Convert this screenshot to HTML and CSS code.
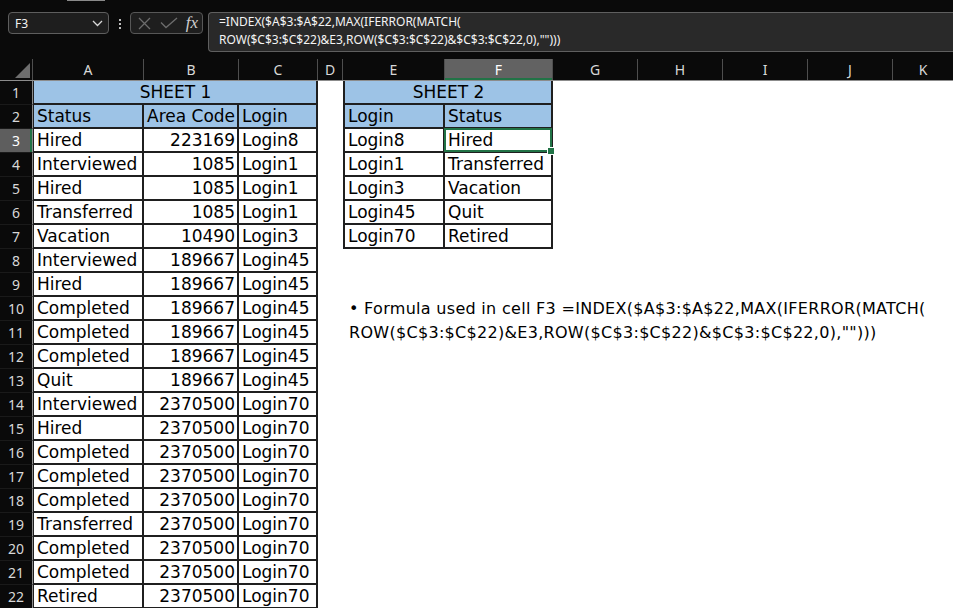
FILE: index.html
```html
<!DOCTYPE html>
<html>
<head>
<meta charset="utf-8">
<link rel="stylesheet" href="styles.css">
</head>
<body>
<div class="topstrip"><div class="thumb"></div></div>
<div class="fbar">
  <div class="namebox"><span>F3</span>
    <svg class="chev" width="11" height="7" viewBox="0 0 11 7"><polyline points="1,1 5.5,5.5 10,1" fill="none" stroke="#d8d8d8" stroke-width="1.3"/></svg>
  </div>
  <div class="dots"><i></i><i></i><i></i></div>
  <div class="fxbox">
    <svg class="xicon" width="13" height="13" viewBox="0 0 13 13"><path d="M1 1 L12 12 M12 1 L1 12" stroke="#6c6c6c" stroke-width="1.3" fill="none"/></svg>
    <svg class="check" width="18" height="12" viewBox="0 0 18 12"><polyline points="1,5.5 6,10.5 17,1" fill="none" stroke="#6c6c6c" stroke-width="1.3"/></svg>
    <span class="fx">fx</span>
  </div>
  <div class="formula">=INDEX($A$3:$A$22,MAX(IFERROR(MATCH(<br>ROW($C$3:$C$22)&amp;E3,ROW($C$3:$C$22)&amp;$C$3:$C$22,0),"")))</div>
</div>

<div class="sheet">
  <div class="hrow">
    <div class="ch corner"><svg width="33" height="21" viewBox="0 0 33 21"><polygon points="15,19 30,4 30,19" fill="#6e6e6e"/></svg></div>
    <div class="ch">A</div><div class="ch">B</div><div class="ch">C</div><div class="ch">D</div>
    <div class="ch">E</div><div class="ch sel">F</div><div class="ch">G</div><div class="ch">H</div>
    <div class="ch">I</div><div class="ch">J</div><div class="ch">K</div>
  </div>

  <div class="row"><div class="rh">1</div><div class="c hb a title1">SHEET 1</div><div class="c hb e title2">SHEET 2</div></div>
  <div class="row"><div class="rh">2</div><div class="c hb a">Status</div><div class="c hb">Area Code</div><div class="c hb">Login</div><div class="c hb e">Login</div><div class="c hb">Status</div></div>
  <div class="row"><div class="rh sel">3</div><div class="c a">Hired</div><div class="c n">223169</div><div class="c">Login8</div><div class="c e">Login8</div><div class="c active">Hired</div></div>
  <div class="row"><div class="rh">4</div><div class="c a">Interviewed</div><div class="c n">1085</div><div class="c">Login1</div><div class="c e">Login1</div><div class="c">Transferred</div></div>
  <div class="row"><div class="rh">5</div><div class="c a">Hired</div><div class="c n">1085</div><div class="c">Login1</div><div class="c e">Login3</div><div class="c">Vacation</div></div>
  <div class="row"><div class="rh">6</div><div class="c a">Transferred</div><div class="c n">1085</div><div class="c">Login1</div><div class="c e">Login45</div><div class="c">Quit</div></div>
  <div class="row"><div class="rh">7</div><div class="c a">Vacation</div><div class="c n">10490</div><div class="c">Login3</div><div class="c e">Login70</div><div class="c">Retired</div></div>
  <div class="row"><div class="rh">8</div><div class="c a">Interviewed</div><div class="c n">189667</div><div class="c">Login45</div></div>
  <div class="row"><div class="rh">9</div><div class="c a">Hired</div><div class="c n">189667</div><div class="c">Login45</div></div>
  <div class="row"><div class="rh">10</div><div class="c a">Completed</div><div class="c n">189667</div><div class="c">Login45</div><div class="note">• Formula used in cell F3 =INDEX($A$3:$A$22,MAX(IFERROR(MATCH(</div></div>
  <div class="row"><div class="rh">11</div><div class="c a">Completed</div><div class="c n">189667</div><div class="c">Login45</div><div class="note">ROW($C$3:$C$22)&amp;E3,ROW($C$3:$C$22)&amp;$C$3:$C$22,0),"")))</div></div>
  <div class="row"><div class="rh">12</div><div class="c a">Completed</div><div class="c n">189667</div><div class="c">Login45</div></div>
  <div class="row"><div class="rh">13</div><div class="c a">Quit</div><div class="c n">189667</div><div class="c">Login45</div></div>
  <div class="row"><div class="rh">14</div><div class="c a">Interviewed</div><div class="c n">2370500</div><div class="c">Login70</div></div>
  <div class="row"><div class="rh">15</div><div class="c a">Hired</div><div class="c n">2370500</div><div class="c">Login70</div></div>
  <div class="row"><div class="rh">16</div><div class="c a">Completed</div><div class="c n">2370500</div><div class="c">Login70</div></div>
  <div class="row"><div class="rh">17</div><div class="c a">Completed</div><div class="c n">2370500</div><div class="c">Login70</div></div>
  <div class="row"><div class="rh">18</div><div class="c a">Completed</div><div class="c n">2370500</div><div class="c">Login70</div></div>
  <div class="row"><div class="rh">19</div><div class="c a">Transferred</div><div class="c n">2370500</div><div class="c">Login70</div></div>
  <div class="row"><div class="rh">20</div><div class="c a">Completed</div><div class="c n">2370500</div><div class="c">Login70</div></div>
  <div class="row"><div class="rh">21</div><div class="c a">Completed</div><div class="c n">2370500</div><div class="c">Login70</div></div>
  <div class="row"><div class="rh">22</div><div class="c a">Retired</div><div class="c n">2370500</div><div class="c">Login70</div></div>
</div>
</body>
</html>
```

FILE: styles.css
```css
html, body {
  margin: 0;
  padding: 0;
}
body {
  background: #0a0a0a;
  width: 953px;
  height: 608px;
  overflow: hidden;
  font-family: "Noto Sans", "Open Sans", sans-serif;
}
.topstrip {
  height: 12px;
}
.thumb {
  margin-left: 67px;
  width: 38px;
  height: 1px;
  background: #8a8a8a;
}
.fbar {
  display: flex;
  align-items: flex-start;
  height: 40px;
  padding-left: 8px;
}
.namebox {
  box-sizing: border-box;
  width: 101px;
  height: 22px;
  border: 1px solid #5e5e5e;
  border-radius: 4px;
  background: #1e1e1e;
  display: flex;
  align-items: center;
  justify-content: space-between;
  padding: 0 5px 0 6px;
  color: #f2f2f2;
  font-size: 12px;
}
.chev {
  display: block;
  margin-top: 1px;
}
.dots {
  width: 21px;
  display: flex;
  flex-direction: column;
  align-items: center;
  gap: 2px;
  padding-top: 7px;
}
.dots i {
  display: block;
  width: 2px;
  height: 2px;
  background: #bdbdbd;
}
.fxbox {
  box-sizing: border-box;
  width: 73px;
  height: 22px;
  border: 1px solid #575757;
  border-radius: 4px;
  background: #1e1e1e;
  display: flex;
  align-items: center;
}
.xicon {
  display: block;
  margin-left: 7px;
}
.check {
  display: block;
  margin-left: 9px;
}
.fx {
  margin-left: auto;
  margin-right: 4px;
  color: #cfcfcf;
  font-family: "Liberation Serif", "DejaVu Serif", serif;
  font-style: italic;
  font-size: 17px;
  line-height: 20px;
}
.formula {
  box-sizing: border-box;
  margin-left: 5px;
  flex: 1;
  height: 40px;
  border: 1px solid #5f5f5f;
  border-right: none;
  border-radius: 4px 0 0 4px;
  background: #292929;
  color: #f4f4f4;
  font-size: 12px;
  line-height: 18px;
  padding: 0 0 0 10px;
  white-space: nowrap;
}
.sheet {
  margin-top: 7px;
}
.hrow, .row {
  display: grid;
  grid-template-columns: 33px 111px 95px 79px 25px 102px 108px 85px 85px 85px 85px 60px;
}
.hrow {
  box-sizing: border-box;
  height: 22px;
  border-bottom: 1px solid #8c8c8c;
}
.ch {
  border-right: 1px solid #4e4e4e;
  color: #d8d8d8;
  text-align: center;
  font-size: 14px;
  line-height: 21px;
}
.ch:last-child {
  border-right: none;
}
.ch.corner svg {
  display: block;
}
.ch.sel {
  background: #626262;
  color: #ffffff;
  box-shadow: inset 0 -2px 0 #217346;
}
.row {
  height: 24px;
  background: #ffffff;
}
.rh {
  box-sizing: border-box;
  background: #0a0a0a;
  color: #d8d8d8;
  text-align: center;
  font-size: 14px;
  line-height: 23px;
  border-right: 1px solid #8c8c8c;
  border-bottom: 1px solid #1a1a1a;
}
.rh.sel {
  background: #5e5e5e;
  color: #ffffff;
  box-shadow: inset -2px 0 0 #217346;
}
.c {
  box-sizing: border-box;
  border-right: 2px solid #1f1f1f;
  border-bottom: 2px solid #1f1f1f;
  padding: 0 2px 0 3px;
  font-family: "DejaVu Sans", sans-serif;
  font-size: 17px;
  line-height: 22px;
  color: #000;
  white-space: nowrap;
  overflow: visible;
}
.c.a {
  border-left: 1px solid #1f1f1f;
  padding-left: 3px;
}
.c.e {
  grid-column: 6;
  border-left: 2px solid #1f1f1f;
  padding-left: 3px;
}
.c.n {
  text-align: right;
}
.hb {
  background: #9dc3e6;
}
.c.title1 {
  grid-column: 2 / span 3;
  text-align: center;
}
.c.title2 {
  grid-column: 6 / span 2;
  text-align: center;
}
.c.active {
  position: relative;
}
.c.active::after {
  content: "";
  position: absolute;
  left: -1px;
  top: -1px;
  right: -1px;
  bottom: -1px;
  border: 2px solid #217346;
}
.c.active::before {
  content: "";
  position: absolute;
  right: -4px;
  bottom: -4px;
  width: 6px;
  height: 6px;
  background: #217346;
  border: 1px solid #ffffff;
  z-index: 2;
}
.note {
  grid-column: 6 / -1;
  padding-left: 6px;
  font-family: "DejaVu Sans", sans-serif;
  font-size: 16px;
  letter-spacing: 0.3px;
  line-height: 24px;
  color: #000;
  white-space: nowrap;
}
```
